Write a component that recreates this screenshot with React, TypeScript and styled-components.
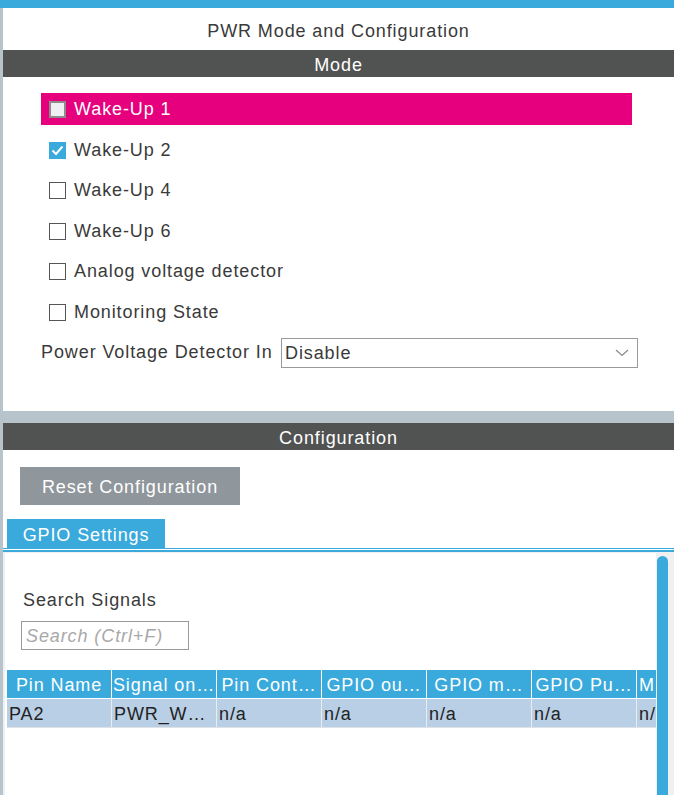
import React from 'react';
import styled, { createGlobalStyle } from 'styled-components';

const palette = {
    blue: '#3aa9dc',
    dark: '#515352',
    pink: '#e6007e',
    strip: '#b8c4cc',
    text: '#3a3a3a',
    button: '#8f969c',
    rowBg: '#b8cfe5',
    light: '#eef0f2',
};

const GlobalStyle = createGlobalStyle`
    html, body {
        margin: 0;
        padding: 0;
        background: ${palette.strip};
    }
    body {
        font-family: 'Liberation Sans', Arial, sans-serif;
        font-size: 18px;
        letter-spacing: 0.9px;
        color: ${palette.text};
    }
    * {
        box-sizing: border-box;
    }
`;

const Page = styled.div`
    width: 674px;
    height: 795px;
    display: flex;
    flex-direction: column;
    overflow: hidden;
`;

const TopBar = styled.div`
    height: 8px;
    background: ${palette.blue};
    flex-shrink: 0;
`;

const Body = styled.div`
    flex: 1;
    display: flex;
    flex-direction: column;
    gap: 12px;
    padding-left: 3px;
    min-height: 0;
`;

const Panel = styled.section<{ $grow?: boolean }>`
    background: white;
    display: flex;
    flex-direction: column;
    ${(p) => (p.$grow ? 'flex: 1; min-height: 0;' : 'height: 403px; flex-shrink: 0;')}
`;

const Title = styled.div`
    height: 42px;
    display: flex;
    align-items: center;
    justify-content: center;
    padding-top: 4px;
`;

const SectionBar = styled.div`
    height: 27px;
    background: ${palette.dark};
    color: white;
    display: flex;
    align-items: center;
    justify-content: center;
    padding-top: 3px;
    flex-shrink: 0;
`;

const ModeList = styled.div`
    display: flex;
    flex-direction: column;
    gap: 8.6px;
    padding: 16px 0 0 38px;
`;

const CheckRow = styled.label<{ $active?: boolean }>`
    width: 591px;
    height: 32px;
    display: flex;
    align-items: center;
    gap: 8px;
    padding: 1px 0 0 8px;
    background: ${(p) => (p.$active ? palette.pink : 'transparent')};
    color: ${(p) => (p.$active ? 'white' : palette.text)};
`;

const Box = styled.span<{ $checked?: boolean; $active?: boolean }>`
    width: 17px;
    height: 17px;
    flex-shrink: 0;
    display: flex;
    align-items: center;
    justify-content: center;
    border: ${(p) =>
        p.$checked
            ? `1px solid ${palette.blue}`
            : p.$active
            ? '2px solid #8c8c8c'
            : '1px solid #555'};
    background: ${(p) => (p.$checked ? palette.blue : p.$active ? palette.light : 'white')};
`;

const SelectRow = styled.div`
    display: flex;
    align-items: center;
    height: 30px;
    margin-top: 0.5px;
    padding-top: 1px;
`;

const SelectLabel = styled.span`
    width: 240px;
    flex-shrink: 0;
`;

const Select = styled.div`
    width: 357px;
    height: 30px;
    border: 1px solid #9a9a9a;
    display: flex;
    align-items: center;
    justify-content: space-between;
    padding: 1px 8px 0 3px;
`;

const ResetButton = styled.button`
    margin: 17px 0 0 17px;
    width: 220px;
    height: 38px;
    border: none;
    background: ${palette.button};
    color: white;
    font-family: inherit;
    font-size: 18px;
    letter-spacing: 0.9px;
    padding: 2px 0 0;
`;

const TabStrip = styled.div`
    margin-top: 14px;
    padding-left: 4px;
    border-bottom: 1px solid ${palette.blue};
    display: flex;
`;

const Tab = styled.div`
    width: 158px;
    height: 29px;
    background: ${palette.blue};
    color: white;
    display: flex;
    align-items: center;
    justify-content: center;
    padding-top: 3px;
`;

const TabUnderline = styled.div`
    height: 3px;
    margin-top: 1px;
    border-top: 2px solid ${palette.blue};
    background: ${palette.light};
`;

const Content = styled.div`
    flex: 1;
    display: flex;
    min-height: 0;
    border-left: 2px solid ${palette.light};
`;

const Main = styled.div`
    flex: 1;
    min-width: 0;
    padding: 36px 0 0 2px;
    overflow: hidden;
`;

const Label = styled.div`
    padding-left: 16px;
    height: 22px;
    line-height: 22px;
`;

const SearchBox = styled.div`
    margin: 10px 0 0 14px;
    width: 168px;
    height: 29px;
    border: 1px solid #999;
    display: flex;
    align-items: center;
    padding: 1px 0 0 4px;
    font-style: italic;
    color: #a8a8a8;
`;

const Table = styled.div`
    margin-top: 20px;
    width: 651px;
    overflow: hidden;
`;

const TRow = styled.div<{ $head?: boolean }>`
    display: grid;
    grid-template-columns: repeat(6, 104px) 20px;
    column-gap: 1px;
    width: max-content;
    background: ${(p) => (p.$head ? 'white' : '#e8ecef')};
    border-bottom: 1px solid ${(p) => (p.$head ? 'white' : '#dde2e6')};
`;

const Cell = styled.div<{ $head?: boolean }>`
    height: 28px;
    display: flex;
    align-items: center;
    justify-content: ${(p) => (p.$head ? 'center' : 'flex-start')};
    padding: 2px ${(p) => (p.$head ? '0' : '2px')} 0;
    white-space: nowrap;
    overflow: hidden;
    background: ${(p) => (p.$head ? palette.blue : palette.rowBg)};
    color: ${(p) => (p.$head ? 'white' : '#222')};
    &:last-child {
        justify-content: flex-start;
        padding-left: 2px;
    }
`;

const ScrollTrack = styled.div`
    width: 18px;
    flex-shrink: 0;
    background: ${palette.light};
    padding: 3px 6px 0 1px;
    display: flex;
    justify-content: flex-end;
`;

const Thumb = styled.div`
    width: 11px;
    height: 100%;
    border-radius: 6px 6px 0 0;
    background: ${palette.blue};
`;

const Check = () => (
    <svg width="13" height="11" viewBox="0 0 13 11">
        <path d="M1.5 5.5 L5 9 L11.5 1.5" fill="none" stroke="white" strokeWidth="2" />
    </svg>
);

const Chevron = () => (
    <svg width="14" height="8" viewBox="0 0 14 8">
        <path d="M1 1 L7 6.5 L13 1" fill="none" stroke="#888" strokeWidth="1.2" />
    </svg>
);

const modes = [
    { label: 'Wake-Up 1', active: true },
    { label: 'Wake-Up 2', checked: true },
    { label: 'Wake-Up 4' },
    { label: 'Wake-Up 6' },
    { label: 'Analog voltage detector' },
    { label: 'Monitoring State' },
];

const headers = ['Pin Name', 'Signal on Pin', 'Pin Context Assignment', 'GPIO output level', 'GPIO mode', 'GPIO Pull-up/Pull-down', 'Maximum output speed'];
const headLabels = ['Pin Name', 'Signal on…', 'Pin Cont…', 'GPIO ou…', 'GPIO m…', 'GPIO Pu…', 'M'];
const row = ['PA2', 'PWR_W…', 'n/a', 'n/a', 'n/a', 'n/a', 'n/'];

const App = () => {
    return (
        <>
            <GlobalStyle />
            <Page>
                <TopBar />
                <Body>
                    <Panel>
                        <Title>PWR Mode and Configuration</Title>
                        <SectionBar>Mode</SectionBar>
                        <ModeList>
                            {modes.map((m) => (
                                <CheckRow key={m.label} $active={m.active}>
                                    <Box $checked={m.checked} $active={m.active}>
                                        {m.checked && <Check />}
                                    </Box>
                                    {m.label}
                                </CheckRow>
                            ))}
                            <SelectRow>
                                <SelectLabel>Power Voltage Detector In</SelectLabel>
                                <Select>
                                    Disable
                                    <Chevron />
                                </Select>
                            </SelectRow>
                        </ModeList>
                    </Panel>
                    <Panel $grow>
                        <SectionBar>Configuration</SectionBar>
                        <div>
                            <ResetButton>Reset Configuration</ResetButton>
                        </div>
                        <TabStrip>
                            <Tab>GPIO Settings</Tab>
                        </TabStrip>
                        <TabUnderline />
                        <Content>
                            <Main>
                                <Label>Search Signals</Label>
                                <SearchBox>Search (Ctrl+F)</SearchBox>
                                <Table>
                                    <TRow $head>
                                        {headLabels.map((h, i) => (
                                            <Cell $head key={h} title={headers[i]}>
                                                {h}
                                            </Cell>
                                        ))}
                                    </TRow>
                                    <TRow>
                                        {row.map((c, i) => (
                                            <Cell key={i}>{c}</Cell>
                                        ))}
                                    </TRow>
                                </Table>
                            </Main>
                            <ScrollTrack>
                                <Thumb />
                            </ScrollTrack>
                        </Content>
                    </Panel>
                </Body>
            </Page>
        </>
    );
};

export default App;
